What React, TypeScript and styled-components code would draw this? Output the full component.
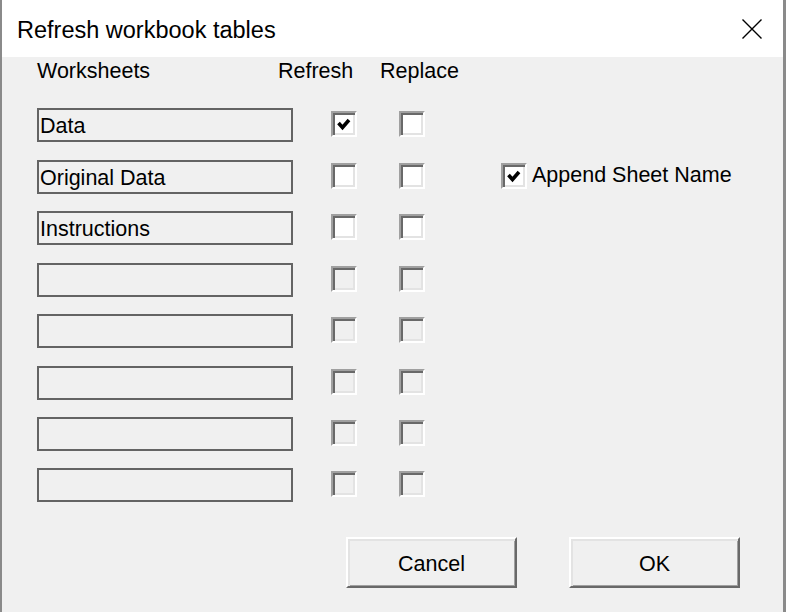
import React from "react";
import styled, { createGlobalStyle } from "styled-components";

const GlobalStyle = createGlobalStyle`
  html, body { margin: 0; padding: 0; background: #f0f0f0; }
  body { font-family: "Liberation Sans", Arial, sans-serif; color: #000; }
`;

const Window = styled.div`
  width: 786px;
  height: 612px;
  box-sizing: border-box;
  border-left: 2px solid #8a8a8a;
  border-right: 3px solid #8a8a8a;
  background: #f0f0f0;
  display: flex;
  flex-direction: column;
  overflow: hidden;
`;

const TitleBar = styled.div`
  height: 57px;
  flex: none;
  box-sizing: border-box;
  background: #fff;
  display: flex;
  align-items: center;
  justify-content: space-between;
  padding: 0 21px 0 15px;
`;

const Title = styled.div`
  font-size: 23.5px;
  line-height: 1;
  padding-top: 4px;
`;

const CloseIcon = styled.svg`
  width: 20px;
  height: 20px;
  display: block;
`;

const Body = styled.div`
  flex: 1;
  display: flex;
  flex-direction: column;
  font-size: 21.5px;
`;

const Header = styled.div`
  height: 28px;
  display: flex;
  align-items: center;
  padding-left: 35px;
`;

const HeaderLabel = styled.div<{ $width?: number }>`
  width: ${(p) => (p.$width ? `${p.$width}px` : "auto")};
  line-height: 28px;
  white-space: nowrap;
`;

const Rows = styled.div`
  margin-top: 23px;
  display: flex;
  flex-direction: column;
`;

const Row = styled.div<{ $h: number }>`
  height: ${(p) => p.$h}px;
  display: flex;
  align-items: flex-start;
  padding-left: 35px;
`;

const TextBox = styled.div`
  width: 256px;
  height: 34px;
  box-sizing: border-box;
  border: 2px solid #646464;
  padding: 1px 0 0 1px;
  line-height: 30px;
  white-space: nowrap;
  overflow: hidden;
`;

const Check = styled.div<{ $ml: number; $disabled?: boolean }>`
  width: 26px;
  height: 26px;
  flex: none;
  box-sizing: border-box;
  margin-top: 3px;
  margin-left: ${(p) => p.$ml}px;
  border: 2px solid;
  border-color: #a0a0a0 #fff #fff #a0a0a0;
  box-shadow: inset 2px 2px 0 #696969, inset -2px -2px 0 #e3e3e3;
  background: ${(p) => (p.$disabled ? "#f0f0f0" : "#fff")};
  display: flex;
  align-items: center;
  justify-content: center;
`;

const CheckMark = styled.svg`
  width: 22px;
  height: 22px;
  display: block;
`;

const Append = styled.div`
  display: flex;
  align-items: flex-start;
  gap: 5px;
`;

const AppendLabel = styled.div`
  margin-top: 2px;
  line-height: 26px;
  white-space: nowrap;
`;

const Footer = styled.div`
  margin-top: 35px;
  display: flex;
  justify-content: flex-end;
  gap: 52px;
  padding-right: 43px;
`;

const Button = styled.button`
  width: 171px;
  height: 51px;
  box-sizing: border-box;
  margin: 0;
  padding: 3px 0 0;
  border: 2px solid;
  border-color: #fff #696969 #696969 #fff;
  box-shadow: inset 2px 2px 0 #e3e3e3, inset -1px -1px 0 #a0a0a0;
  background: #f0f0f0;
  font-family: "Liberation Sans", Arial, sans-serif;
  font-size: 21.5px;
  color: #000;
`;

const Tick = () => (
  <CheckMark viewBox="0 0 22 22">
    <polyline
      points="5.5,10 9.5,14.5 16,7"
      fill="none"
      stroke="#000"
      strokeWidth="3.6"
      strokeLinejoin="miter"
    />
  </CheckMark>
);

type Sheet = { name: string; refresh: boolean; replace: boolean; enabled: boolean };

const sheets: Sheet[] = [
  { name: "Data", refresh: true, replace: false, enabled: true },
  { name: "Original Data", refresh: false, replace: false, enabled: true },
  { name: "Instructions", refresh: false, replace: false, enabled: true },
  { name: "", refresh: false, replace: false, enabled: false },
  { name: "", refresh: false, replace: false, enabled: false },
  { name: "", refresh: false, replace: false, enabled: false },
  { name: "", refresh: false, replace: false, enabled: false },
  { name: "", refresh: false, replace: false, enabled: false },
];

const rowHeights = [52, 51, 52, 51, 52, 51, 51, 34];

export default function App() {
  return (
    <>
      <GlobalStyle />
      <Window>
        <TitleBar>
          <Title>Refresh workbook tables</Title>
          <CloseIcon viewBox="0 0 20 20">
            <path d="M0.5 0.5 L19.5 19.5 M19.5 0.5 L0.5 19.5" stroke="#000" strokeWidth="1.4" fill="none" />
          </CloseIcon>
        </TitleBar>
        <Body>
          <Header>
            <HeaderLabel $width={241}>Worksheets</HeaderLabel>
            <HeaderLabel $width={102}>Refresh</HeaderLabel>
            <HeaderLabel>Replace</HeaderLabel>
          </Header>
          <Rows>
            {sheets.map((s, i) => (
              <Row key={i} $h={rowHeights[i]}>
                <TextBox>{s.name}</TextBox>
                <Check $ml={38} $disabled={!s.enabled}>
                  {s.refresh && <Tick />}
                </Check>
                <Check $ml={42} $disabled={!s.enabled}>
                  {s.replace && <Tick />}
                </Check>
                {i === 1 && (
                  <Append>
                    <Check $ml={76}>
                      <Tick />
                    </Check>
                    <AppendLabel>Append Sheet Name</AppendLabel>
                  </Append>
                )}
              </Row>
            ))}
          </Rows>
          <Footer>
            <Button>Cancel</Button>
            <Button>OK</Button>
          </Footer>
        </Body>
      </Window>
    </>
  );
}
